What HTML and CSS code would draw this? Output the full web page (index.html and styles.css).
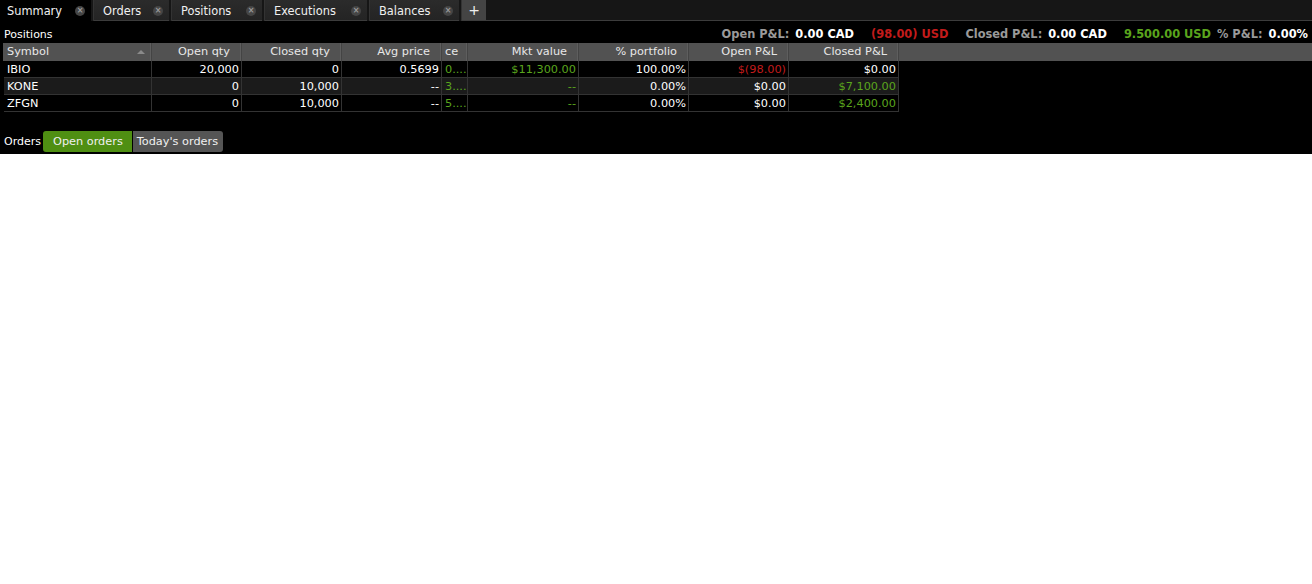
FILE: index.html
```html
<!DOCTYPE html>
<html>
<head>
<meta charset="utf-8">
<link rel="stylesheet" href="styles.css">
</head>
<body>
<div class="app">
  <div class="tabbar">
    <div class="tab active w-summary"><span>Summary</span><span class="close">×</span></div>
    <div class="tab w-orders"><span>Orders</span><span class="close">×</span></div>
    <div class="tab w-positions"><span>Positions</span><span class="close">×</span></div>
    <div class="tab w-executions"><span>Executions</span><span class="close">×</span></div>
    <div class="tab w-balances"><span>Balances</span><span class="close">×</span></div>
    <div class="tab add">+</div>
    <div class="tab-fill"></div>
  </div>
  <div class="infobar">
    <span class="label">Positions</span>
    <div class="totals">
      <span class="k">Open P&amp;L:</span><span class="v">0.00 CAD</span>
      <span class="v red">(98.00) USD</span>
      <span class="k">Closed P&amp;L:</span><span class="v">0.00 CAD</span>
      <span class="v green">9.500.00 USD</span>
      <span class="k">% P&amp;L:</span><span class="v">0.00%</span>
    </div>
  </div>
  <div class="grid">
    <div class="head">
      <div class="cols">
        <div class="c l sym">Symbol<span class="sort"></span></div>
        <div class="c r">Open qty</div>
        <div class="c r">Closed qty</div>
        <div class="c r">Avg price</div>
        <div class="c l">ce</div>
        <div class="c r">Mkt value</div>
        <div class="c r">% portfolio</div>
        <div class="c r">Open P&amp;L</div>
        <div class="c r">Closed P&amp;L</div>
      </div>
    </div>
    <div class="cols row">
      <div class="c l">IBIO</div>
      <div class="c r">20,000</div>
      <div class="c r">0</div>
      <div class="c r">0.5699</div>
      <div class="c l green">0....</div>
      <div class="c r green">$11,300.00</div>
      <div class="c r">100.00%</div>
      <div class="c r red">$(98.00)</div>
      <div class="c r">$0.00</div>
    </div>
    <div class="cols row alt">
      <div class="c l">KONE</div>
      <div class="c r">0</div>
      <div class="c r">10,000</div>
      <div class="c r">--</div>
      <div class="c l green">3....</div>
      <div class="c r green">--</div>
      <div class="c r">0.00%</div>
      <div class="c r">$0.00</div>
      <div class="c r green">$7,100.00</div>
    </div>
    <div class="cols row">
      <div class="c l">ZFGN</div>
      <div class="c r">0</div>
      <div class="c r">10,000</div>
      <div class="c r">--</div>
      <div class="c l green">5....</div>
      <div class="c r green">--</div>
      <div class="c r">0.00%</div>
      <div class="c r">$0.00</div>
      <div class="c r green">$2,400.00</div>
    </div>
  </div>
  <div class="orders">
    <span class="label">Orders</span>
    <div class="seg">
      <span class="btn on">Open orders</span>
      <span class="btn">Today's orders</span>
    </div>
  </div>
</div>
</body>
</html>
```
FILE: styles.css
```css
html, body {
  margin: 0;
  padding: 0;
  background: #ffffff;
}
.app {
  background: #000000;
  height: 154px;
  font-family: "DejaVu Sans", Verdana, sans-serif;
  font-size: 11.3px;
  color: #ffffff;
  overflow: hidden;
}
.tabbar {
  display: flex;
  height: 21px;
  background: #161616;
}
.tab {
  display: flex;
  align-items: center;
  justify-content: space-between;
  box-sizing: border-box;
  padding: 1px 6px 0 9px;
  margin-right: 3px;
  background: linear-gradient(#2b2b2b, #242424);
  border-bottom: 1px solid #3c3c3c;
  box-shadow: -1px 0 0 #333333;
  color: #f0f0f0;
  font-size: 11.4px;
}
.tab:first-child {
  padding-left: 7px;
  box-shadow: none;
}
.w-summary { width: 91px; }
.w-orders { width: 75px; }
.w-positions { width: 90px; }
.w-executions { width: 102px; }
.w-balances { width: 89px; }
.tab.active {
  background: #000000;
  border-bottom-color: #000000;
}
.close {
  width: 10px;
  height: 10px;
  border-radius: 50%;
  background: #454545;
  color: #9a9a9a;
  font-size: 8px;
  line-height: 10px;
  text-align: center;
  font-weight: bold;
}
.tab.add {
  width: 24px;
  padding: 0;
  justify-content: center;
  background: #444444;
  font-size: 14px;
  margin-right: 0;
}
.tab-fill {
  flex: 1;
  border-bottom: 1px solid #3c3c3c;
}
.infobar {
  display: flex;
  justify-content: space-between;
  align-items: flex-end;
  box-sizing: border-box;
  height: 22px;
  padding: 0 4px 2px 4px;
}
.label {
  font-size: 11px;
}
.totals {
  display: flex;
  align-items: center;
  font-weight: bold;
  font-size: 11.4px;
}
.totals .k {
  color: #9a9a9a;
  margin-right: 6px;
}
.totals .v {
  color: #ffffff;
  margin-right: 17px;
}
.totals .v:last-child {
  margin-right: 0;
}
.totals .green {
  margin-right: 6px;
}
.red { color: #c21b1b !important; }
.green { color: #5aa51d !important; }
.grid {
  display: flex;
  flex-direction: column;
  padding-left: 4px;
}
.cols {
  display: grid;
  grid-template-columns: 148px 90px 100px 100px 26px 111px 110px 100px 110px;
  width: 895px;
}
.head {
  background: #525252;
  height: 18px;
  margin-left: -1px;
  padding-left: 1px;
  color: #e8e8e8;
}
.head .cols {
  height: 18px;
}
.head .c {
  border-right: 1px solid #444444;
  box-shadow: inset -1px 0 0 #5e5e5e;
  line-height: 18px;
}
.head .c.r {
  padding-right: 11px;
}
.sym {
  position: relative;
}
.sort {
  position: absolute;
  right: 6px;
  top: 7px;
  width: 0;
  height: 0;
  border-left: 4px solid transparent;
  border-right: 4px solid transparent;
  border-bottom: 4px solid #8a8a8a;
}
.c {
  padding: 0 3px;
  white-space: nowrap;
  overflow: hidden;
}
.c.l {
  text-align: left;
}
.c.r {
  text-align: right;
  padding-right: 2px;
}
.row {
  height: 17px;
  border-bottom: 1px solid #333333;
  box-sizing: border-box;
}
.row .c {
  line-height: 14px;
  padding-top: 2px;
  border-right: 1px solid #333333;
}
.row.alt {
  background: #1b1b1b;
}
.orders {
  display: flex;
  align-items: center;
  gap: 2px;
  margin-top: 19px;
  padding-left: 4px;
}
.seg {
  display: flex;
  height: 21px;
}
.btn {
  display: flex;
  align-items: center;
  padding: 0 5px 0 4px;
  background: #555555;
  color: #f0f0f0;
  font-size: 11.3px;
  border-radius: 0 3px 3px 0;
}
.btn.on {
  background: #4f8f12;
  border-radius: 3px 0 0 3px;
  padding: 0 9px 0 10px;
  margin-right: 1px;
}
```
